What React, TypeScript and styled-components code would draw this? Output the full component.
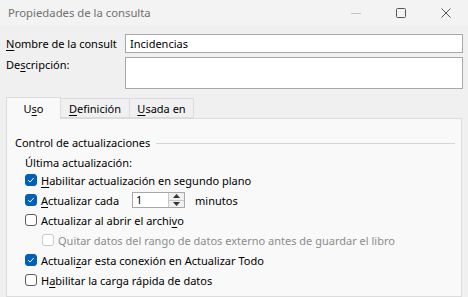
import React from 'react';
import styled, { createGlobalStyle } from 'styled-components';

const GlobalStyle = createGlobalStyle`
  html, body {
    margin: 0;
    padding: 0;
    background: #f0f0f0;
  }
  body {
    font-family: 'Noto Sans', 'Open Sans', sans-serif;
    font-size: 11px;
    color: #000;
  }
`;

const Window = styled.div`
  width: 468px;
  height: 297px;
  overflow: hidden;
  display: flex;
  flex-direction: column;
  background: #f0f0f0;
`;

const TitleBar = styled.div`
  height: 25px;
  flex: none;
  display: flex;
  align-items: center;
  padding-left: 8px;
  background: #f3f3f3;
  color: #707070;
  font-size: 11.3px;
`;

const TitleText = styled.div`
  flex: 1;
`;

const Control = styled.div`
  width: 45px;
  height: 25px;
  display: flex;
  align-items: center;
  justify-content: center;
`;

const FormGrid = styled.div`
  display: grid;
  grid-template-columns: 119px 338px;
  row-gap: 4px;
  padding: 9px 0 0 6px;
`;

const Label = styled.div<{ $lh: number }>`
  line-height: ${(p) => p.$lh}px;
  white-space: nowrap;
`;

const TextBox = styled.div<{ $h: number }>`
  height: ${(p) => p.$h}px;
  box-sizing: border-box;
  border: 1px solid #a8a8a8;
  background: #fff;
  padding: 0 4px;
  line-height: ${(p) => p.$h - 2}px;
`;

const Tabs = styled.div`
  display: flex;
  align-items: flex-end;
  padding: 8px 0 0 6px;
  height: 21px;
  flex: none;
  position: relative;
  z-index: 1;
`;

const Tab = styled.div<{ $active?: boolean; $w: number }>`
  box-sizing: border-box;
  width: ${(p) => p.$w}px;
  height: ${(p) => (p.$active ? 22 : 20)}px;
  margin-bottom: ${(p) => (p.$active ? -1 : 0)}px;
  border: 1px solid #dcdcdc;
  border-bottom: ${(p) => (p.$active ? 'none' : '1px solid #dcdcdc')};
  border-left: ${(p) => (p.$active ? '1px solid #dcdcdc' : 'none')};
  background: ${(p) => (p.$active ? '#f9f9f9' : '#f0f0f0')};
  display: flex;
  align-items: center;
  justify-content: center;
  white-space: nowrap;
`;

const Panel = styled.div`
  flex: 1;
  margin: 0 6px;
  border: 1px solid #dcdcdc;
  background: #f9f9f9;
  padding: 16px 0 0 8px;
`;

const GroupHead = styled.div`
  display: flex;
  align-items: center;
  gap: 6px;
  padding-right: 6px;
  line-height: 16px;
`;

const GroupLine = styled.div`
  flex: 1;
  height: 1px;
  background: #d6d6d6;
`;

const Indent = styled.div`
  padding: 4px 0 0 10px;
`;

const Caption = styled.div`
  height: 15px;
  line-height: 15px;
`;

const Row = styled.div<{ $indent?: number }>`
  display: flex;
  align-items: center;
  height: 20px;
  padding-left: ${(p) => p.$indent ?? 0}px;
  gap: 4px;
  white-space: nowrap;
`;

const Box = styled.div<{ $checked?: boolean; $disabled?: boolean }>`
  width: 12px;
  height: 12px;
  box-sizing: border-box;
  border-radius: 3px;
  flex: none;
  border: 1px solid
    ${(p) => (p.$checked ? '#005fb8' : p.$disabled ? '#c8c8c8' : '#5c5c5c')};
  background: ${(p) => (p.$checked ? '#005fb8' : '#fff')};
  display: flex;
  align-items: center;
  justify-content: center;
`;

const RowText = styled.span<{ $disabled?: boolean }>`
  color: ${(p) => (p.$disabled ? '#8c8c8c' : '#000')};
`;

const Spinner = styled.div`
  display: flex;
  width: 53px;
  height: 16px;
  box-sizing: border-box;
  border: 1px solid #a8a8a8;
  background: #fff;
  margin-left: 9px;
  margin-right: 6px;
`;

const SpinValue = styled.div`
  flex: 1;
  padding-left: 3px;
  line-height: 14px;
`;

const SpinButtons = styled.div`
  width: 15px;
  display: flex;
  flex-direction: column;
  border-left: 1px solid #c8c8c8;
  background: #f0f0f0;
`;

const SpinButton = styled.div`
  flex: 1;
  display: flex;
  align-items: center;
  justify-content: center;
  & + & {
    border-top: 1px solid #c8c8c8;
  }
`;

const U = styled.span`
  text-decoration: underline;
  text-underline-offset: 2px;
`;

const Check = () => (
  <svg width="8" height="8" viewBox="0 0 8 8">
    <path d="M1.2 4.2 L3.1 6 L6.8 1.9" fill="none" stroke="#fff" strokeWidth="1" />
  </svg>
);

const CheckRow = ({
  checked,
  disabled,
  indent,
  children,
}: {
  checked?: boolean;
  disabled?: boolean;
  indent?: number;
  children: React.ReactNode;
}) => (
  <Row $indent={indent}>
    <Box $checked={checked} $disabled={disabled}>
      {checked && <Check />}
    </Box>
    <RowText $disabled={disabled}>{children}</RowText>
  </Row>
);

const App = () => {
  return (
    <>
      <GlobalStyle />
      <Window>
        <TitleBar>
          <TitleText>Propiedades de la consulta</TitleText>
          <Control>
            <svg width="10" height="10" viewBox="0 0 10 10">
              <path d="M0 5.5 H10" stroke="#c4c4c4" strokeWidth="1" />
            </svg>
          </Control>
          <Control>
            <svg width="10" height="10" viewBox="0 0 10 10">
              <rect x="0.5" y="0.5" width="9" height="9" rx="1" fill="none" stroke="#555" />
            </svg>
          </Control>
          <Control>
            <svg width="10" height="10" viewBox="0 0 10 10">
              <path d="M0.5 0.5 L9.5 9.5 M9.5 0.5 L0.5 9.5" stroke="#555" strokeWidth="1" />
            </svg>
          </Control>
        </TitleBar>

        <FormGrid>
          <Label $lh={19}>
            <U>N</U>ombre de la consult
          </Label>
          <TextBox $h={19}>Incidencias</TextBox>
          <Label $lh={15}>
            De<U>s</U>cripción:
          </Label>
          <TextBox $h={32} />
        </FormGrid>

        <Tabs>
          <Tab $active $w={55}>
            U<U>s</U>o
          </Tab>
          <Tab $w={69}>
            <U>D</U>efinición
          </Tab>
          <Tab $w={64}>
            <U>U</U>sada en
          </Tab>
        </Tabs>

        <Panel>
          <GroupHead>
            <span>Control de actualizaciones</span>
            <GroupLine />
          </GroupHead>
          <Indent>
            <Caption>Última actualización:</Caption>
            <CheckRow checked>
              <U>H</U>abilitar actualización en segundo plano
            </CheckRow>
            <Row>
              <Box $checked>
                <Check />
              </Box>
              <RowText>
                <U>A</U>ctualizar cada
              </RowText>
              <Spinner>
                <SpinValue>1</SpinValue>
                <SpinButtons>
                  <SpinButton>
                    <svg width="7" height="4" viewBox="0 0 7 4">
                      <path d="M3.5 0 L7 4 H0 Z" fill="#333" />
                    </svg>
                  </SpinButton>
                  <SpinButton>
                    <svg width="7" height="4" viewBox="0 0 7 4">
                      <path d="M0 0 H7 L3.5 4 Z" fill="#333" />
                    </svg>
                  </SpinButton>
                </SpinButtons>
              </Spinner>
              <RowText>minutos</RowText>
            </Row>
            <CheckRow>
              Actualizar al abrir el archi<U>v</U>o
            </CheckRow>
            <CheckRow disabled indent={17}>
              Quitar datos del rango de datos externo antes de guardar el libro
            </CheckRow>
            <CheckRow checked>
              Actuali<U>z</U>ar esta conexión en Actualizar Todo
            </CheckRow>
            <CheckRow>
              H<U>a</U>bilitar la carga rápida de datos
            </CheckRow>
          </Indent>
        </Panel>
      </Window>
    </>
  );
};

export default App;
